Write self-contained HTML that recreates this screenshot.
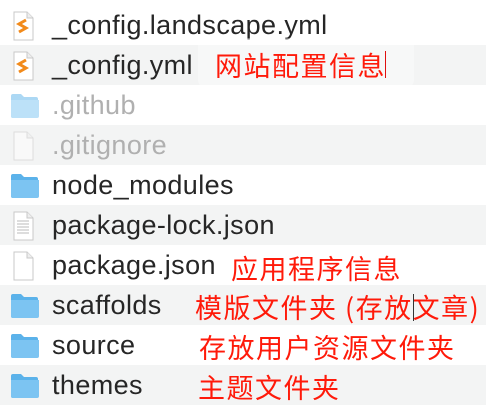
<!DOCTYPE html>
<html><head><meta charset="utf-8"><style>
body{margin:0;width:486px;height:414px;background:#fff;position:relative;overflow:hidden;font-family:"Liberation Sans",sans-serif}
.row{position:absolute;left:0;width:486px;height:40px}
.g{background:#f3f4f4}
.t{position:absolute;left:52px;top:3px;font-size:27px;line-height:34px;color:#262626;white-space:nowrap;letter-spacing:0.4px}
.dim{color:#b0b0b0}
.ic{position:absolute;left:10px;top:6px}
.cn{position:absolute;font-family:"Noto Sans CJK SC","WenQuanYi Zen Hei",sans-serif;font-size:27px;color:#ff1a0a;white-space:nowrap;line-height:30px;letter-spacing:1.5px}
.bx{position:absolute;background:rgba(255,255,255,0.35);border-radius:8px}
</style></head><body>
<svg width="0" height="0" style="position:absolute"><defs>
<g id="doc"><path d="M4 1h13l6 6v22H4z" fill="#fff" stroke="#c8c8c8"/><path d="M17 1v6h6" fill="#eee" stroke="#c8c8c8"/></g>
<g id="fold"><path d="M1 5a2 2 0 0 1 2-2h8l3 3h12a2 2 0 0 1 2 2v17a2 2 0 0 1-2 2H3a2 2 0 0 1-2-2z" fill="#5bb2ea"/><path d="M1 9h28v16a2 2 0 0 1-2 2H3a2 2 0 0 1-2-2z" fill="#7cc4f2"/></g>
</defs></svg>

<div class="row" style="top:5px"><svg class="ic" width="30" height="30"><use href="#doc"/><path d="M16 9l-7 4 7 4-7 4" stroke="#f28a1a" stroke-width="3" fill="none"/></svg><div class="t">_config.landscape.yml</div></div>
<div class="row g" style="top:45px"><svg class="ic" width="30" height="30"><use href="#doc"/><path d="M16 9l-7 4 7 4-7 4" stroke="#f28a1a" stroke-width="3" fill="none"/></svg><div class="t">_config.yml</div></div>
<div class="row" style="top:85px"><svg class="ic" width="30" height="30" opacity="0.5"><use href="#fold"/></svg><div class="t dim">.github</div></div>
<div class="row g" style="top:125px"><svg class="ic" width="30" height="30" opacity="0.5"><use href="#doc"/></svg><div class="t dim">.gitignore</div></div>
<div class="row" style="top:165px"><svg class="ic" width="30" height="30"><use href="#fold"/></svg><div class="t">node_modules</div></div>
<div class="row g" style="top:205px"><svg class="ic" width="30" height="30"><use href="#doc"/><path d="M7 10h12M7 13h12M7 16h12M7 19h12M7 22h12" stroke="#bbb"/></svg><div class="t">package-lock.json</div></div>
<div class="row" style="top:245px"><svg class="ic" width="30" height="30"><use href="#doc"/></svg><div class="t">package.json</div></div>
<div class="row g" style="top:285px"><svg class="ic" width="30" height="30"><use href="#fold"/></svg><div class="t">scaffolds</div></div>
<div class="row" style="top:325px"><svg class="ic" width="30" height="30"><use href="#fold"/></svg><div class="t">source</div></div>
<div class="row g" style="top:365px"><svg class="ic" width="30" height="30"><use href="#fold"/></svg><div class="t">themes</div></div>

<div class="bx" style="left:198px;top:38px;width:216px;height:50px"></div>
<div class="cn" style="left:215px;top:50px">网站配置信息</div>
<div style="position:absolute;left:385px;top:51px;width:1px;height:27px;background:#e01010"></div>
<div class="cn" style="left:231px;top:253px">应用程序信息</div>
<div class="cn" style="left:195px;top:292px;letter-spacing:1.5px">模版文件夹 (存放文章)</div>
<div style="position:absolute;left:413px;top:294px;width:1px;height:27px;background:#333"></div>
<div class="cn" style="left:199px;top:332px">存放用户资源文件夹</div>
<div class="cn" style="left:198px;top:372px">主题文件夹</div>
</body></html>
